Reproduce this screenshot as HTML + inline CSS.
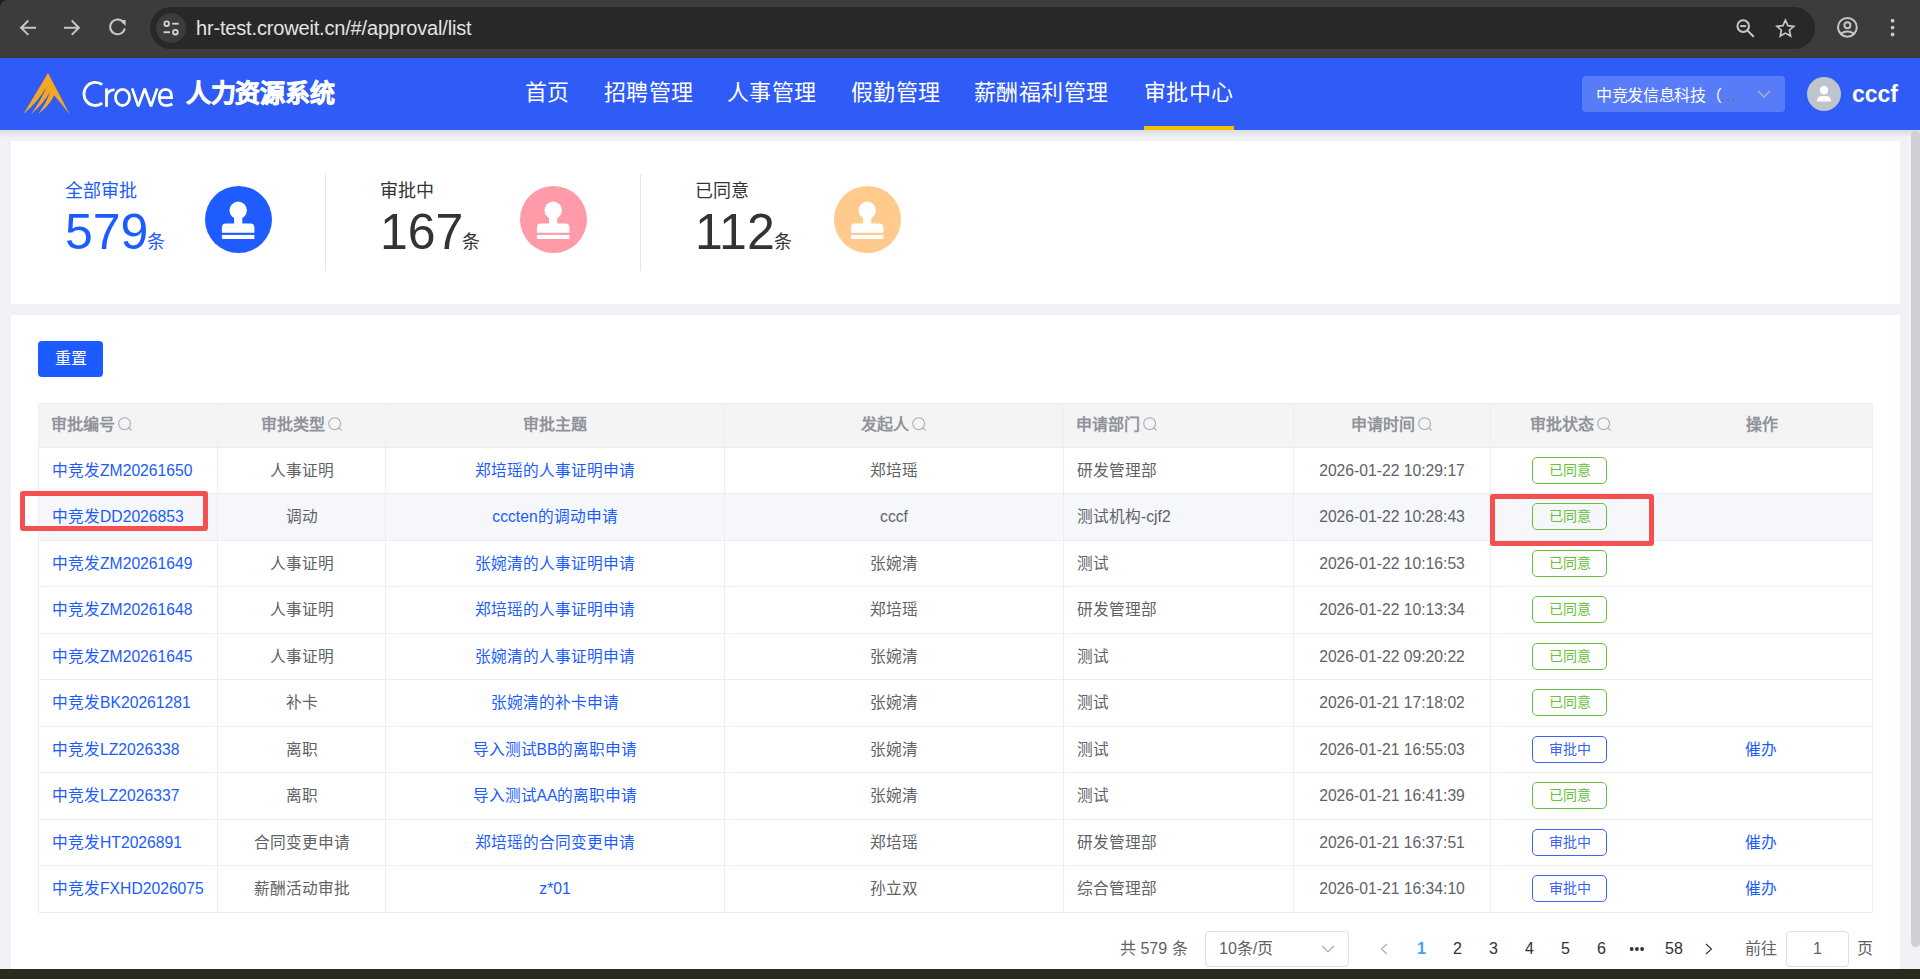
<!DOCTYPE html>
<html lang="zh-CN">
<head>
<meta charset="utf-8">
<title>Crowe 人力资源系统</title>
<style>
*{box-sizing:border-box;margin:0;padding:0}
html,body{width:1920px;height:979px;overflow:hidden;background:#f0f2f5;font-family:"Liberation Sans",sans-serif;}
.abs{position:absolute}
#chrome{position:absolute;left:0;top:0;width:1920px;height:58px;background:#3c3c3c}
#omni{position:absolute;left:150px;top:7px;width:1665px;height:42px;border-radius:21px;background:#282828}
#siteinfo{position:absolute;left:156px;top:13px;width:30px;height:30px;border-radius:15px;background:#3c3c3c}
#url{position:absolute;left:196px;top:15px;font-size:20px;line-height:26px;color:#e3e3e3;white-space:nowrap;letter-spacing:-0.17px}
.ic{position:absolute}
#hdr{position:absolute;left:0;top:58px;width:1920px;height:72px;background:#2f5bf6}
.nav{position:absolute;top:78px;font-size:22px;letter-spacing:0.45px;line-height:30px;color:#fff;white-space:nowrap}
#navbar{position:absolute;left:1144px;top:126px;width:90px;height:4px;background:#fcbf00}
#company{position:absolute;left:1582px;top:76px;width:203px;height:36px;border-radius:4px;background:rgba(255,255,255,.2)}
#comptxt{position:absolute;left:1596px;top:84px;font-size:16px;line-height:24px;color:#fff;white-space:nowrap;letter-spacing:-0.35px}
#avatar{position:absolute;left:1807px;top:77px;width:34px;height:34px;border-radius:17px;background:#c0c4cc}
#uname{position:absolute;left:1852px;top:79px;font-size:23px;line-height:30px;font-weight:bold;color:#fff}
#logotxt{position:absolute;left:81px;top:76px;font-size:35px;line-height:36px;color:#fff;letter-spacing:-2px;white-space:nowrap}
#logocn{position:absolute;left:186px;top:78px;font-size:25px;line-height:30px;color:#fff;font-weight:bold;letter-spacing:-0.3px;-webkit-text-stroke:0.7px #fff;white-space:nowrap}
#shadow{position:absolute;left:0;top:130px;width:1920px;height:8px;background:linear-gradient(#dcdde1,#f0f2f5)}
.card{position:absolute;background:#fff}
.lbl{position:absolute;font-size:18px;line-height:20px;color:#333;white-space:nowrap}
.num{position:absolute;font-size:50px;line-height:56px;color:#333;white-space:nowrap}
.num small{font-size:18px;position:relative;top:-1px;margin-left:-1px}
.circ{position:absolute;width:67px;height:67px;border-radius:50%}
.circ svg{position:absolute;left:0;top:0}
.vdiv{position:absolute;top:174px;width:1px;height:97px;background:#e5e5e5}
#reset{position:absolute;left:38px;top:341px;width:65px;height:36px;border-radius:4px;background:#1c5bff;color:#fff;font-size:16px;line-height:36px;text-align:center}
.hl{position:absolute;left:38px;width:1835px;height:1px;background:#ebeef5}
.vl{position:absolute;top:403px;width:1px;height:510px;background:#ebeef5}
.th{position:absolute;font-size:16px;font-weight:bold;color:#909399;line-height:44px;white-space:nowrap}
.td{position:absolute;font-size:15.7px;color:#606266;white-space:nowrap;line-height:46px}
.th .si{display:inline-block;vertical-align:middle;margin-left:3px;position:relative;top:-1px}
.c{text-align:center}
.l{padding-left:12px}
.td.l{padding-left:13px}
.lnk{color:#1c5cff}
.tag{display:inline-block;width:75px;height:27px;border:1px solid #67c23a;border-radius:5px;color:#67c23a;font-size:14px;line-height:25px;text-align:center;vertical-align:middle;position:relative;top:-1px;left:-1px}
.tag.b{border-color:#3d62f4;color:#3d62f4}
.ann{position:absolute;border:5px solid #f55050;border-radius:3px}
.pg{position:absolute;top:937px;font-size:16px;line-height:24px;color:#606266;white-space:nowrap}
#bottom{position:absolute;left:0;top:969px;width:1920px;height:10px;background:#2a2a1d}
#sbthumb{position:absolute;left:1911px;top:131px;width:9px;height:816px;border-radius:5px;background:#cfd0d4}
.pn{color:#303133}

</style>
</head>
<body>
<div id="chrome">
  <div class="abs" style="left:0;top:0;width:8px;height:8px;background:#1e1f1e"></div>
  <div class="abs" style="left:0;top:0;width:20px;height:20px;border-top-left-radius:8px;background:#3c3c3c"></div>
  <div id="omni"></div>
  <div id="siteinfo"></div>
  <div id="url">hr-test.croweit.cn/#/approval/list</div>
  <svg class="ic" style="left:0;top:0" width="200" height="58" viewBox="0 0 200 58">
    <g fill="none" stroke="#c7c7c7" stroke-width="2" stroke-linecap="square">
      <path d="M35 27.7 H21.5 M27.6 21.2 L21.1 27.7 L27.6 34.2"/>
      <path d="M65 27.7 H78.5 M72.4 21.2 L78.9 27.7 L72.4 34.2"/>
      <path d="M124 23.2 A7.4 7.4 0 1 0 124.8 28.5" stroke-linecap="butt"/>
    </g>
    <path d="M119.6 20.1 L125.6 20.1 L125.6 26.1 Z" fill="#c7c7c7"/>
    <g fill="none" stroke="#d4d4d4" stroke-width="1.8">
      <circle cx="166.7" cy="23.7" r="2.3"/>
      <path d="M172.2 23.7 H178.6"/>
      <path d="M163.6 32.2 H170"/>
      <circle cx="175.4" cy="32.2" r="2.3"/>
    </g>
  </svg>
  <svg class="ic" style="left:1725px;top:0" width="195" height="58" viewBox="1725 0 195 58">
    <g fill="none" stroke="#c7c7c7" stroke-width="2">
      <circle cx="1743.2" cy="26.1" r="5.8"/>
      <path d="M1740.2 26.1 H1746.2"/>
      <path d="M1747.4 30.4 L1753.2 36.2" stroke-linecap="round"/>
      <path d="M1785.4 20.2 L1787.9 25.6 L1793.8 26.3 L1789.4 30.2 L1790.6 36 L1785.4 33.1 L1780.2 36 L1781.4 30.2 L1777 26.3 L1782.9 25.6 Z" stroke-linejoin="miter" stroke-width="1.7"/>
      <circle cx="1847.4" cy="27.3" r="9.4"/>
      <circle cx="1847.4" cy="25.3" r="3"/>
      <path d="M1840.6 33.8 Q1847.4 29.2 1854.2 33.8"/>
    </g>
    <g fill="#c7c7c7"><circle cx="1892.6" cy="20.7" r="1.9"/><circle cx="1892.6" cy="27.6" r="1.9"/><circle cx="1892.6" cy="34.5" r="1.9"/></g>
  </svg>
</div>
<div id="hdr"></div>
<div id="shadow"></div>
<svg class="ic" style="left:18px;top:68px" width="56" height="52" viewBox="0 0 56 52">
  <path d="M30 5 L51.8 46.5 Q43.5 36 36.1 27.3 Q32.15 36.75 20.2 46.2 Q28.65 34.9 32.1 23.6 Q26.45 34.9 13 46.2 Q23.25 32.25 28.9 18.3 Q21.5 32.25 5.3 46.2 Z" fill="#f5a81f"/>
</svg>
<svg class="ic" style="left:76px;top:74px" width="104" height="38" viewBox="0 0 104 38">
  <g fill="none" stroke="#fff" stroke-width="2.8">
    <path d="M26.2 10.6 A11.4 11.6 0 1 0 26.2 29.2"/>
    <path d="M30.5 14.4 V32.8"/>
    <path d="M30.5 21.5 Q32.5 15.6 38.6 15.9"/>
    <ellipse cx="46.5" cy="23.4" rx="7" ry="8.1"/>
    <path d="M56.2 14.4 L62.3 32.4 L68.7 14.8 L75 32.4 L81.2 14.4" stroke-linejoin="bevel" stroke-width="2.7"/>
    <path d="M84 23.6 H95.6 Q95.8 15.3 89.6 15.3 Q83.3 15.5 83.3 23.8 Q83.6 31.6 90.2 31.6 Q93.8 31.6 96.3 30"/>
  </g>
</svg>
<div id="logocn">人力资源系统</div>
<div class="nav" style="left:524.5px">首页</div>
<div class="nav" style="left:604px">招聘管理</div>
<div class="nav" style="left:727px">人事管理</div>
<div class="nav" style="left:851px">假勤管理</div>
<div class="nav" style="left:974px">薪酬福利管理</div>
<div class="nav" style="left:1144px">审批中心</div>
<div id="navbar"></div>
<div id="company"></div>
<div id="comptxt">中竞发信息科技（<span style="color:#6e7282;letter-spacing:0.6px">...</span></div>
<svg class="ic" style="left:1755px;top:88px" width="18" height="12" viewBox="0 0 18 12"><path d="M3 3 L9 9 L15 3" fill="none" stroke="#b3b3b8" stroke-width="1.3"/></svg>
<div id="avatar"><svg width="34" height="34" viewBox="0 0 34 34"><circle cx="17" cy="13.3" r="4.2" fill="#fff"/><path d="M9.8 24.6 Q10.2 19 15 19 H19 Q23.8 19 24.2 24.6 Z" fill="#fff"/></svg></div>
<div id="uname">cccf</div>

<div class="card" style="left:11px;top:141px;width:1889px;height:163px"></div>
<div class="card" style="left:11px;top:315px;width:1889px;height:664px"></div>

<div class="lbl" style="left:65px;top:181px;color:#1c5cff">全部审批</div>
<div class="num" style="left:65px;top:204px;color:#1c5cff">579<small>条</small></div>
<div class="circ" style="left:205px;top:186px;background:#1f5cff"><svg width="67" height="67" viewBox="0 0 67 67"><circle cx="33.2" cy="24.3" r="8.7" fill="#fff"/><rect x="29.1" y="30" width="8.2" height="8.5" fill="#fff"/><path d="M16.9 46.8 L16.9 41.6 Q16.9 37.6 20.9 37.6 L45.4 37.6 Q49.4 37.6 49.4 41.6 L49.4 46.8 Z" fill="#fff"/><rect x="16.9" y="48.9" width="32.5" height="4.1" fill="#fff"/></svg></div>
<div class="vdiv" style="left:325px"></div>
<div class="lbl" style="left:380px;top:181px">审批中</div>
<div class="num" style="left:380px;top:204px">167<small>条</small></div>
<div class="circ" style="left:520px;top:186px;background:#ff9aa8"><svg width="67" height="67" viewBox="0 0 67 67"><circle cx="33.2" cy="24.3" r="8.7" fill="#fff"/><rect x="29.1" y="30" width="8.2" height="8.5" fill="#fff"/><path d="M16.9 46.8 L16.9 41.6 Q16.9 37.6 20.9 37.6 L45.4 37.6 Q49.4 37.6 49.4 41.6 L49.4 46.8 Z" fill="#fff"/><rect x="16.9" y="48.9" width="32.5" height="4.1" fill="#fff"/></svg></div>
<div class="vdiv" style="left:640px"></div>
<div class="lbl" style="left:695px;top:181px">已同意</div>
<div class="num" style="left:695px;top:204px">112<small>条</small></div>
<div class="circ" style="left:834px;top:186px;background:#ffca8c"><svg width="67" height="67" viewBox="0 0 67 67"><circle cx="33.2" cy="24.3" r="8.7" fill="#fff"/><rect x="29.1" y="30" width="8.2" height="8.5" fill="#fff"/><path d="M16.9 46.8 L16.9 41.6 Q16.9 37.6 20.9 37.6 L45.4 37.6 Q49.4 37.6 49.4 41.6 L49.4 46.8 Z" fill="#fff"/><rect x="16.9" y="48.9" width="32.5" height="4.1" fill="#fff"/></svg></div>

<div id="reset">重置</div>

<div id="tblwrap">
<div class="abs" style="left:38px;top:403px;width:1835px;height:44px;background:#f4f4f5"></div>
<div class="abs" style="left:38px;top:493px;width:1834px;height:47px;background:#f5f7fa"></div>
<div class="hl" style="top:403.00px"></div>
<div class="hl" style="top:447.00px"></div>
<div class="hl" style="top:493.00px"></div>
<div class="hl" style="top:540.00px"></div>
<div class="hl" style="top:586.00px"></div>
<div class="hl" style="top:633.00px"></div>
<div class="hl" style="top:679.00px"></div>
<div class="hl" style="top:726.00px"></div>
<div class="hl" style="top:772.00px"></div>
<div class="hl" style="top:819.00px"></div>
<div class="hl" style="top:865.00px"></div>
<div class="hl" style="top:912.00px"></div>
<div class="vl" style="left:38px"></div>
<div class="vl" style="left:217px"></div>
<div class="vl" style="left:385px"></div>
<div class="vl" style="left:724px"></div>
<div class="vl" style="left:1063px"></div>
<div class="vl" style="left:1293px"></div>
<div class="vl" style="left:1490px"></div>
<div class="vl" style="left:1872px"></div>
<div class="th l" style="left:39px;width:178px;top:403px;height:44px"><span>审批编号</span><svg class="si" width="15" height="15" viewBox="0 0 15 15"><circle cx="6.6" cy="6.6" r="5.9" fill="none" stroke="#a8abb2" stroke-width="1.1"/><path d="M10.9 10.9 L13.2 13.2" stroke="#a8abb2" stroke-width="1.2" stroke-linecap="round"/></svg></div>
<div class="th c" style="left:218px;width:167px;top:403px;height:44px"><span>审批类型</span><svg class="si" width="15" height="15" viewBox="0 0 15 15"><circle cx="6.6" cy="6.6" r="5.9" fill="none" stroke="#a8abb2" stroke-width="1.1"/><path d="M10.9 10.9 L13.2 13.2" stroke="#a8abb2" stroke-width="1.2" stroke-linecap="round"/></svg></div>
<div class="th c" style="left:386px;width:338px;top:403px;height:44px"><span>审批主题</span></div>
<div class="th c" style="left:725px;width:338px;top:403px;height:44px"><span>发起人</span><svg class="si" width="15" height="15" viewBox="0 0 15 15"><circle cx="6.6" cy="6.6" r="5.9" fill="none" stroke="#a8abb2" stroke-width="1.1"/><path d="M10.9 10.9 L13.2 13.2" stroke="#a8abb2" stroke-width="1.2" stroke-linecap="round"/></svg></div>
<div class="th l" style="left:1064px;width:229px;top:403px;height:44px"><span>申请部门</span><svg class="si" width="15" height="15" viewBox="0 0 15 15"><circle cx="6.6" cy="6.6" r="5.9" fill="none" stroke="#a8abb2" stroke-width="1.1"/><path d="M10.9 10.9 L13.2 13.2" stroke="#a8abb2" stroke-width="1.2" stroke-linecap="round"/></svg></div>
<div class="th c" style="left:1294px;width:196px;top:403px;height:44px"><span>申请时间</span><svg class="si" width="15" height="15" viewBox="0 0 15 15"><circle cx="6.6" cy="6.6" r="5.9" fill="none" stroke="#a8abb2" stroke-width="1.1"/><path d="M10.9 10.9 L13.2 13.2" stroke="#a8abb2" stroke-width="1.2" stroke-linecap="round"/></svg></div>
<div class="th c" style="left:1491px;width:159px;top:403px;height:44px"><span>审批状态</span><svg class="si" width="15" height="15" viewBox="0 0 15 15"><circle cx="6.6" cy="6.6" r="5.9" fill="none" stroke="#a8abb2" stroke-width="1.1"/><path d="M10.9 10.9 L13.2 13.2" stroke="#a8abb2" stroke-width="1.2" stroke-linecap="round"/></svg></div>
<div class="th c" style="left:1651px;width:221px;top:403px;height:44px"><span>操作</span></div>
<div class="td l lnk" style="left:39px;width:178px;top:448px;height:45px;line-height:45px">中竞发ZM20261650</div>
<div class="td c" style="left:218px;width:167px;top:448px;height:45px;line-height:45px">人事证明</div>
<div class="td c lnk" style="left:386px;width:338px;top:448px;height:45px;line-height:45px">郑培瑶的人事证明申请</div>
<div class="td c" style="left:725px;width:338px;top:448px;height:45px;line-height:45px">郑培瑶</div>
<div class="td l" style="left:1064px;width:229px;top:448px;height:45px;line-height:45px">研发管理部</div>
<div class="td c" style="left:1294px;width:196px;top:448px;height:45px;line-height:45px">2026-01-22 10:29:17</div>
<div class="td c" style="left:1491px;width:159px;top:448px;height:45px;line-height:45px"><span class="tag">已同意</span></div>
<div class="td l lnk" style="left:39px;width:178px;top:494px;height:46px;line-height:46px">中竞发DD2026853</div>
<div class="td c" style="left:218px;width:167px;top:494px;height:46px;line-height:46px">调动</div>
<div class="td c lnk" style="left:386px;width:338px;top:494px;height:46px;line-height:46px">cccten的调动申请</div>
<div class="td c" style="left:725px;width:338px;top:494px;height:46px;line-height:46px">cccf</div>
<div class="td l" style="left:1064px;width:229px;top:494px;height:46px;line-height:46px">测试机构-cjf2</div>
<div class="td c" style="left:1294px;width:196px;top:494px;height:46px;line-height:46px">2026-01-22 10:28:43</div>
<div class="td c" style="left:1491px;width:159px;top:494px;height:46px;line-height:46px"><span class="tag">已同意</span></div>
<div class="td l lnk" style="left:39px;width:178px;top:541px;height:45px;line-height:45px">中竞发ZM20261649</div>
<div class="td c" style="left:218px;width:167px;top:541px;height:45px;line-height:45px">人事证明</div>
<div class="td c lnk" style="left:386px;width:338px;top:541px;height:45px;line-height:45px">张婉清的人事证明申请</div>
<div class="td c" style="left:725px;width:338px;top:541px;height:45px;line-height:45px">张婉清</div>
<div class="td l" style="left:1064px;width:229px;top:541px;height:45px;line-height:45px">测试</div>
<div class="td c" style="left:1294px;width:196px;top:541px;height:45px;line-height:45px">2026-01-22 10:16:53</div>
<div class="td c" style="left:1491px;width:159px;top:541px;height:45px;line-height:45px"><span class="tag">已同意</span></div>
<div class="td l lnk" style="left:39px;width:178px;top:587px;height:46px;line-height:46px">中竞发ZM20261648</div>
<div class="td c" style="left:218px;width:167px;top:587px;height:46px;line-height:46px">人事证明</div>
<div class="td c lnk" style="left:386px;width:338px;top:587px;height:46px;line-height:46px">郑培瑶的人事证明申请</div>
<div class="td c" style="left:725px;width:338px;top:587px;height:46px;line-height:46px">郑培瑶</div>
<div class="td l" style="left:1064px;width:229px;top:587px;height:46px;line-height:46px">研发管理部</div>
<div class="td c" style="left:1294px;width:196px;top:587px;height:46px;line-height:46px">2026-01-22 10:13:34</div>
<div class="td c" style="left:1491px;width:159px;top:587px;height:46px;line-height:46px"><span class="tag">已同意</span></div>
<div class="td l lnk" style="left:39px;width:178px;top:634px;height:45px;line-height:45px">中竞发ZM20261645</div>
<div class="td c" style="left:218px;width:167px;top:634px;height:45px;line-height:45px">人事证明</div>
<div class="td c lnk" style="left:386px;width:338px;top:634px;height:45px;line-height:45px">张婉清的人事证明申请</div>
<div class="td c" style="left:725px;width:338px;top:634px;height:45px;line-height:45px">张婉清</div>
<div class="td l" style="left:1064px;width:229px;top:634px;height:45px;line-height:45px">测试</div>
<div class="td c" style="left:1294px;width:196px;top:634px;height:45px;line-height:45px">2026-01-22 09:20:22</div>
<div class="td c" style="left:1491px;width:159px;top:634px;height:45px;line-height:45px"><span class="tag">已同意</span></div>
<div class="td l lnk" style="left:39px;width:178px;top:680px;height:46px;line-height:46px">中竞发BK20261281</div>
<div class="td c" style="left:218px;width:167px;top:680px;height:46px;line-height:46px">补卡</div>
<div class="td c lnk" style="left:386px;width:338px;top:680px;height:46px;line-height:46px">张婉清的补卡申请</div>
<div class="td c" style="left:725px;width:338px;top:680px;height:46px;line-height:46px">张婉清</div>
<div class="td l" style="left:1064px;width:229px;top:680px;height:46px;line-height:46px">测试</div>
<div class="td c" style="left:1294px;width:196px;top:680px;height:46px;line-height:46px">2026-01-21 17:18:02</div>
<div class="td c" style="left:1491px;width:159px;top:680px;height:46px;line-height:46px"><span class="tag">已同意</span></div>
<div class="td l lnk" style="left:39px;width:178px;top:727px;height:45px;line-height:45px">中竞发LZ2026338</div>
<div class="td c" style="left:218px;width:167px;top:727px;height:45px;line-height:45px">离职</div>
<div class="td c lnk" style="left:386px;width:338px;top:727px;height:45px;line-height:45px">导入测试BB的离职申请</div>
<div class="td c" style="left:725px;width:338px;top:727px;height:45px;line-height:45px">张婉清</div>
<div class="td l" style="left:1064px;width:229px;top:727px;height:45px;line-height:45px">测试</div>
<div class="td c" style="left:1294px;width:196px;top:727px;height:45px;line-height:45px">2026-01-21 16:55:03</div>
<div class="td c" style="left:1491px;width:159px;top:727px;height:45px;line-height:45px"><span class="tag b">审批中</span></div>
<div class="td c lnk" style="left:1651px;width:221px;top:727px;height:45px;line-height:45px;text-indent:-2px">催办</div>
<div class="td l lnk" style="left:39px;width:178px;top:773px;height:46px;line-height:46px">中竞发LZ2026337</div>
<div class="td c" style="left:218px;width:167px;top:773px;height:46px;line-height:46px">离职</div>
<div class="td c lnk" style="left:386px;width:338px;top:773px;height:46px;line-height:46px">导入测试AA的离职申请</div>
<div class="td c" style="left:725px;width:338px;top:773px;height:46px;line-height:46px">张婉清</div>
<div class="td l" style="left:1064px;width:229px;top:773px;height:46px;line-height:46px">测试</div>
<div class="td c" style="left:1294px;width:196px;top:773px;height:46px;line-height:46px">2026-01-21 16:41:39</div>
<div class="td c" style="left:1491px;width:159px;top:773px;height:46px;line-height:46px"><span class="tag">已同意</span></div>
<div class="td l lnk" style="left:39px;width:178px;top:820px;height:45px;line-height:45px">中竞发HT2026891</div>
<div class="td c" style="left:218px;width:167px;top:820px;height:45px;line-height:45px">合同变更申请</div>
<div class="td c lnk" style="left:386px;width:338px;top:820px;height:45px;line-height:45px">郑培瑶的合同变更申请</div>
<div class="td c" style="left:725px;width:338px;top:820px;height:45px;line-height:45px">郑培瑶</div>
<div class="td l" style="left:1064px;width:229px;top:820px;height:45px;line-height:45px">研发管理部</div>
<div class="td c" style="left:1294px;width:196px;top:820px;height:45px;line-height:45px">2026-01-21 16:37:51</div>
<div class="td c" style="left:1491px;width:159px;top:820px;height:45px;line-height:45px"><span class="tag b">审批中</span></div>
<div class="td c lnk" style="left:1651px;width:221px;top:820px;height:45px;line-height:45px;text-indent:-2px">催办</div>
<div class="td l lnk" style="left:39px;width:178px;top:866px;height:46px;line-height:46px">中竞发FXHD2026075</div>
<div class="td c" style="left:218px;width:167px;top:866px;height:46px;line-height:46px">薪酬活动审批</div>
<div class="td c lnk" style="left:386px;width:338px;top:866px;height:46px;line-height:46px">z*01</div>
<div class="td c" style="left:725px;width:338px;top:866px;height:46px;line-height:46px">孙立双</div>
<div class="td l" style="left:1064px;width:229px;top:866px;height:46px;line-height:46px">综合管理部</div>
<div class="td c" style="left:1294px;width:196px;top:866px;height:46px;line-height:46px">2026-01-21 16:34:10</div>
<div class="td c" style="left:1491px;width:159px;top:866px;height:46px;line-height:46px"><span class="tag b">审批中</span></div>
<div class="td c lnk" style="left:1651px;width:221px;top:866px;height:46px;line-height:46px;text-indent:-2px">催办</div>
</div>
<div class="ann" style="left:20px;top:491px;width:188px;height:40px"></div>
<div class="ann" style="left:1490px;top:494px;width:164px;height:52px"></div>

<div class="pg" style="left:1120px;top:937px">共 579 条</div>
<div class="abs" style="left:1205px;top:931px;width:144px;height:36px;border:1px solid #dcdfe6;border-radius:4px"></div>
<div class="pg" style="left:1219px;top:937px">10条/页</div>
<svg class="ic" style="left:1320px;top:943px" width="16" height="12" viewBox="0 0 16 12"><path d="M2.2 3 L8 8.8 L13.8 3" fill="none" stroke="#a8abb2" stroke-width="1.2"/></svg>
<svg class="ic" style="left:1378px;top:941px" width="12" height="16" viewBox="0 0 12 16"><path d="M9 3 L3.5 8 L9 13" fill="none" stroke="#a8abb2" stroke-width="1.1"/></svg>
<div class="pg" style="left:1417px;color:#409eff;font-weight:bold">1</div>
<div class="pg pn" style="left:1453px">2</div>
<div class="pg pn" style="left:1489px">3</div>
<div class="pg pn" style="left:1525px">4</div>
<div class="pg pn" style="left:1561px">5</div>
<div class="pg pn" style="left:1597px">6</div>
<svg class="ic" style="left:1628px;top:945px" width="18" height="8" viewBox="0 0 18 8"><g fill="#303133"><circle cx="3.7" cy="4" r="1.9"/><circle cx="8.9" cy="4" r="1.9"/><circle cx="14.1" cy="4" r="1.9"/></g></svg>
<div class="pg pn" style="left:1665px">58</div>
<svg class="ic" style="left:1703px;top:941px" width="12" height="16" viewBox="0 0 12 16"><path d="M3 3 L8.5 8 L3 13" fill="none" stroke="#303133" stroke-width="1.1"/></svg>
<div class="pg" style="left:1745px;top:937px">前往</div>
<div class="abs" style="left:1786px;top:931px;width:63px;height:36px;border:1px solid #dcdfe6;border-radius:4px"></div>
<div class="pg pn" style="left:1813px;color:#606266">1</div>
<div class="pg" style="left:1857px;top:937px">页</div>

<div id="bottom"></div>
<div id="sbthumb"></div>

</body>
</html>
